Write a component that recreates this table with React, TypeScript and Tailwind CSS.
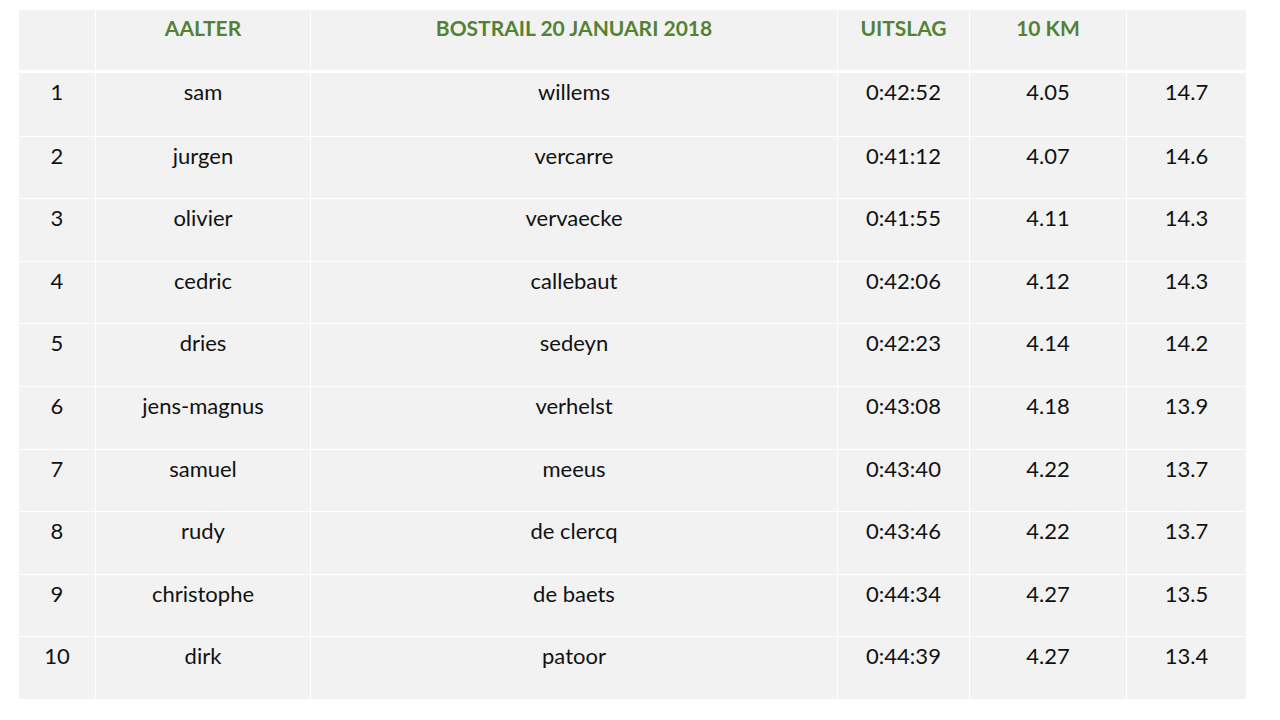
const rows = [
  ["1", "sam", "willems", "0:42:52", "4.05", "14.7"],
  ["2", "jurgen", "vercarre", "0:41:12", "4.07", "14.6"],
  ["3", "olivier", "vervaecke", "0:41:55", "4.11", "14.3"],
  ["4", "cedric", "callebaut", "0:42:06", "4.12", "14.3"],
  ["5", "dries", "sedeyn", "0:42:23", "4.14", "14.2"],
  ["6", "jens-magnus", "verhelst", "0:43:08", "4.18", "13.9"],
  ["7", "samuel", "meeus", "0:43:40", "4.22", "13.7"],
  ["8", "rudy", "de clercq", "0:43:46", "4.22", "13.7"],
  ["9", "christophe", "de baets", "0:44:34", "4.27", "13.5"],
  ["10", "dirk", "patoor", "0:44:39", "4.27", "13.4"],
];

const header = ["", "AALTER", "BOSTRAIL 20 JANUARI 2018", "UITSLAG", "10 KM", ""];

const cols = "grid grid-cols-[76px_215px_527px_132px_157px_120px]";

export default function App() {
  return (
    <div className="w-[1280px] h-[720px] bg-white pt-[10px] pl-[19px] font-['Lato','Open_Sans',sans-serif] text-[#111]">
      <div className="w-[1227px]">
        {/* Header */}
        <div className={`${cols} h-[63px] border-b-[3px] border-white`}>
          {header.map((h, i) => (
            <div
              key={i}
              className={`bg-[#f2f2f2] pt-[4px] text-center text-[21px] leading-[28px] font-bold text-[#548235] ${i > 0 ? "border-l border-white" : ""}`}
            >
              {h}
            </div>
          ))}
        </div>

        {/* Rows */}
        {rows.map((r, ri) => (
          <div key={ri} className={`${cols} h-[62.6px] ${ri > 0 ? "border-t border-white" : ""}`}>
            {r.map((c, i) => (
              <div
                key={i}
                className={`bg-[#f2f2f2] pt-[5px] text-center text-[22px] leading-[28px] ${i > 0 ? "border-l border-white" : ""}`}
              >
                {c}
              </div>
            ))}
          </div>
        ))}
      </div>
    </div>
  );
}
